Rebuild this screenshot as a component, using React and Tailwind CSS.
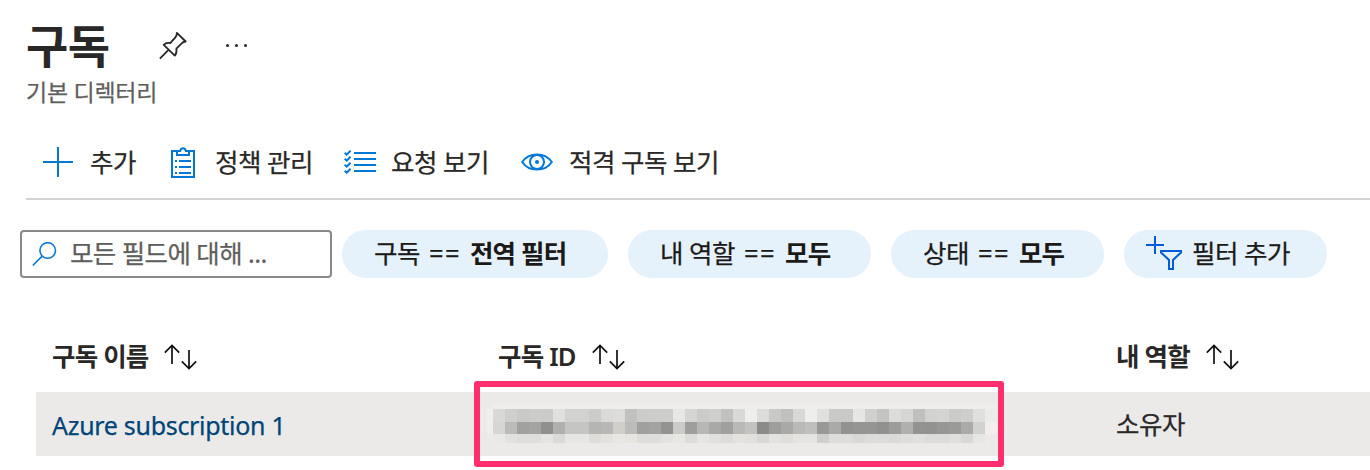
import React from 'react';

const columns = [
  { label: '구독 이름', className: 'w-[446px]' },
  { label: '구독 ID', className: 'w-[618px]' },
  { label: '내 역할', className: 'flex-1' },
];

// Each column of the masked id: top edge row, body row, lower row
const mosaic = [
  ['#d9d9d8', '#d6d6d5', '#eae9e8'], ['#cfcfce', '#bbbbba', '#e1e1df'], ['#c9c9c8', '#a1a1a0', '#dededc'],
  ['#cccccb', '#a4a4a3', '#dededc'], ['#cbcbca', '#90908f', '#e4e4e2'], ['#e0e0df', '#b0b0af', '#dadad8'],
  ['#d2d2d1', '#c5c5c4', '#e6e6e5'], ['#d2d2d1', '#c5c5c4', '#e6e6e5'], ['#cccccb', '#b5b5b4', '#e0ddd9'],
  ['#dbdad6', '#b8b8b7', '#e4e2e0'], ['#dcdcda', '#d0cfca', '#eae6e3'], ['#c1c1c0', '#bcbcbb', '#e6e5e0'],
  ['#cccccb', '#a0a09f', '#dddddb'], ['#cdcdcc', '#a3a3a2', '#dddddb'], ['#cdcdcc', '#939391', '#e2e2e0'],
  ['#e8e8e7', '#cbcbca', '#e8e7e2'], ['#d5d5d4', '#9e9e9d', '#dcdcda'], ['#cbcbca', '#b7b7b6', '#e5e5e3'],
  ['#cfcfce', '#a9a9a8', '#e0e0de'], ['#c1c1c0', '#a0a09f', '#dedcd8'], ['#d9d9d8', '#b9b9b8', '#e4e1df'],
  ['#eeeeed', '#c2c2c1', '#e0e0dc'], ['#dcdcdb', '#8b8b89', '#d8d8d7'], ['#c9c9c8', '#9e9e9d', '#e2e2e0'],
  ['#c0c0bf', '#a9a9a8', '#e1deda'], ['#d8d8d7', '#b9b9b8', '#e4e4e2'], ['#eeeeed', '#bfbfbe', '#e4e4e2'],
  ['#e0e0df', '#999998', '#cfcfce'], ['#c9c9c8', '#aaaaa9', '#dddddb'], ['#c9c9c8', '#929291', '#dddddb'],
  ['#e6e6e5', '#959594', '#d8d8d6'], ['#d0d0cf', '#959594', '#dcdcda'], ['#c4c4c3', '#91918f', '#dcdcda'],
  ['#dcdcdb', '#9c9c9b', '#dcdad6'], ['#d6d6d5', '#b0b0af', '#dddddb'], ['#c0c0bf', '#939391', '#e0e0de'],
  ['#d2d2d1', '#929290', '#dcdcda'], ['#d4d4d3', '#979796', '#dcdcda'], ['#cbcbca', '#9a9a99', '#dfdfdd'],
  ['#cececd', '#aaaaa9', '#d8d8d6'], ['#dfdfde', '#d2d2d1', '#e6e6e5'], ['#ebebea', '#f3eeeb', '#ebeae9'],
];

const PinIcon = () => (
  <svg width="30" height="30" viewBox="0 0 30 30" fill="none" stroke="#292827" strokeWidth="1.8" strokeLinejoin="round">
    <path d="M18.900 2.900l8.800 8.600c-1.900.1-2.800.6-3.800 1.700l-5.500 5.400c.4 2.900.2 4.900-1.600 7L5.700 14.800c1.800-1.900 4-2.300 6.500-1.700l5.200-5.700c1.100-1.200 1.400-2.400 1.500-4.500zM10.700 19.700L1.900 28.700" />
  </svg>
);

const PlusIcon = () => (
  <svg width="30" height="30" viewBox="0 0 30 30" stroke="#0078d4" strokeWidth="2">
    <path d="M15 0v30M0 15h30" />
  </svg>
);

const ClipboardIcon = () => (
  <svg width="24" height="32" viewBox="0 0 24 32" fill="none" stroke="#0078d4" strokeWidth="2">
    <path d="M6 5H1v26h22V5h-5" />
    <path d="M6 5v4h12V5h-3.200a2.900 3.600 0 0 0-5.600 0H6z" />
    <path d="M4 15h2M8 15h12M4 21h2M8 21h12M4 27h2M8 27h12" />
  </svg>
);

const ChecklistIcon = () => (
  <svg width="32" height="24" viewBox="0 0 32 24" fill="none" stroke="#0078d4" strokeWidth="2">
    <path d="M10 3h22M10 9h22M10 15h22M10 21h22" />
    <path d="M.7 2.800l2 1.900L6.600.8M.7 8.800l2 1.900 3.900-3.900M.7 14.800l2 1.900 3.900-3.900M.7 20.800l2 1.900 3.900-3.900" />
  </svg>
);

const EyeIcon = () => (
  <svg width="32" height="18" viewBox="0 0 32 18" fill="none" stroke="#0078d4" strokeWidth="2">
    <path d="M1.200 9C4.500 4 10 1.400 16 1.400S27.500 4 30.800 9C27.500 14 22 16.600 16 16.600S4.500 14 1.200 9z" />
    <circle cx="16" cy="9" r="7" />
    <circle cx="16" cy="9" r="2" fill="#0078d4" stroke="none" />
  </svg>
);

const SearchIcon = () => (
  <svg width="25" height="25" viewBox="0 0 25 25" fill="none" stroke="#0f78d4" strokeWidth="1.6">
    <circle cx="15.700" cy="8.500" r="7.800" />
    <path d="M10.200 14.100L.8 23.500" />
  </svg>
);

const AddFilterIcon = () => (
  <svg width="36" height="34" viewBox="0 0 36 34" fill="none" stroke="#015cda" strokeWidth="2">
    <path d="M9 0v18M0 9h18" />
    <path d="M15 15h20v1.500l-8 7.500v9h-4v-9l-8-7.500z" />
  </svg>
);

const SortIcon = () => (
  <svg width="33" height="26" viewBox="0 0 33 26" fill="none" stroke="#111" strokeWidth="1.700">
    <path d="M8 20V2M.8 8.700L8 1.500l7.200 7.200M25 6v18M17.800 17.300l7.200 7.200 7.200-7.200" />
  </svg>
);

const actions = [
  { label: '추가', icon: <PlusIcon />, className: 'w-[128px] gap-[17px]' },
  { label: '정책 관리', icon: <ClipboardIcon />, className: 'w-[173px] gap-[20px]' },
  { label: '요청 보기', icon: <ChecklistIcon />, className: 'w-[177px] gap-[15px]' },
  { label: '적격 구독 보기', icon: <EyeIcon />, className: 'gap-[16px]' },
];

const filters = [
  { name: '구독', value: '전역 필터', className: 'w-[266px]' },
  { name: '내 역할', value: '모두', className: 'w-[243px]' },
  { name: '상태', value: '모두', className: 'w-[213px]' },
];

const App = () => {
  return (
    <div className="w-[1370px] h-[470px] overflow-hidden bg-white text-[#292827] text-[25.500px] leading-[36px] tracking-[-0.500px] whitespace-nowrap [-webkit-text-stroke:0.250px] font-['Noto_Sans','Noto_Sans_CJK_KR',sans-serif]">
      <header className="h-[108px] pl-[26px] pt-[14px]">
        <div className="flex items-center h-[62px]">
          <h1 className="w-[132px] text-[46px] font-bold leading-[62px] tracking-[-0.500px] [-webkit-text-stroke:0px]">구독</h1>
          <PinIcon />
          <div className="flex gap-[6px] ml-[38px]">
            <span className="size-[3px] rounded-full bg-[#292827]" />
            <span className="size-[3px] rounded-full bg-[#292827]" />
            <span className="size-[3px] rounded-full bg-[#292827]" />
          </div>
        </div>
        <p className="text-[23px] leading-[32px] tracking-[-0.250px] text-[#605e5c]">기본 디렉터리</p>
      </header>

      <nav className="flex items-center ml-[26px] pl-[17px] h-[92px] pt-[17px] border-b-2 border-[#d2d2d2]">
        {actions.map((action) => (
          <button key={action.label} className={`flex items-center shrink-0 ${action.className}`}>
            {action.icon}
            <span>{action.label}</span>
          </button>
        ))}
      </nav>

      <div className="flex items-center mt-[30px] ml-[20px] h-[48px]">
        <div className="flex items-center w-[312px] h-[48px] mr-[10px] pl-[10px] gap-[13px] border-2 border-[#8a8886] rounded-[4px] text-[#605e5c]">
          <SearchIcon />
          <span className="-mt-[2px] tracking-[-0.600px]">모든 필드에 대해 ...</span>
        </div>
        {filters.map((filter) => (
          <button
            key={filter.name}
            className={`flex items-center pl-[32px] pb-[2px] gap-[9px] h-[48px] mr-[20px] rounded-full bg-[#e5f1fb] text-[#1b1a19] ${filter.className}`}
          >
            <span>{filter.name}</span>
            <span className="w-[32px] tracking-[1.500px]">==</span>
            <span className="font-bold tracking-[-0.800px] [-webkit-text-stroke:0px]">{filter.value}</span>
          </button>
        ))}
        <button className="flex items-center w-[203px] h-[48px] pl-[22px] pb-[2px] gap-[10px] rounded-full bg-[#e5f1fb] text-[#1b1a19]">
          <AddFilterIcon />
          <span>필터 추가</span>
        </button>
      </div>

      <div className="mt-[42px] ml-[36px]">
        <div className="flex items-center h-[72px] pl-[16px] font-semibold tracking-[-0.800px] [-webkit-text-stroke:0px]">
          {columns.map((column) => (
            <div key={column.label} className={`flex items-center gap-[16px] ${column.className}`}>
              <span>{column.label}</span>
              <span className="pt-[2px]">
                <SortIcon />
              </span>
            </div>
          ))}
        </div>
        <div className="relative flex items-center h-[64px] pl-[16px] bg-[#ebeae9]">
          <a className="w-[435px] pt-[2px] text-[#004578] text-[25px] tracking-[-0.300px]">Azure subscription 1</a>
          <div className="flex w-[629px] h-[40px]">
            <div className="w-[6px] mt-[5px] h-[25px] bg-[#f0efee]" />
            {mosaic.map(([top, body, low], i) => (
              <div key={i} className="w-[12px]">
                <div className="h-[5px] bg-[#eeedec]" />
                <div className="h-[13px]" style={{ backgroundColor: top }} />
                <div className="h-[12px]" style={{ backgroundColor: body }} />
                <div className="h-[9px]" style={{ backgroundColor: low }} />
              </div>
            ))}
          </div>
          <span>소유자</span>
          <div className="absolute left-[438px] -top-[11px] w-[530px] h-[86px] border-[6px] border-[#ff2f6e] rounded-[3px]" />
        </div>
      </div>
    </div>
  );
};

export default App;
